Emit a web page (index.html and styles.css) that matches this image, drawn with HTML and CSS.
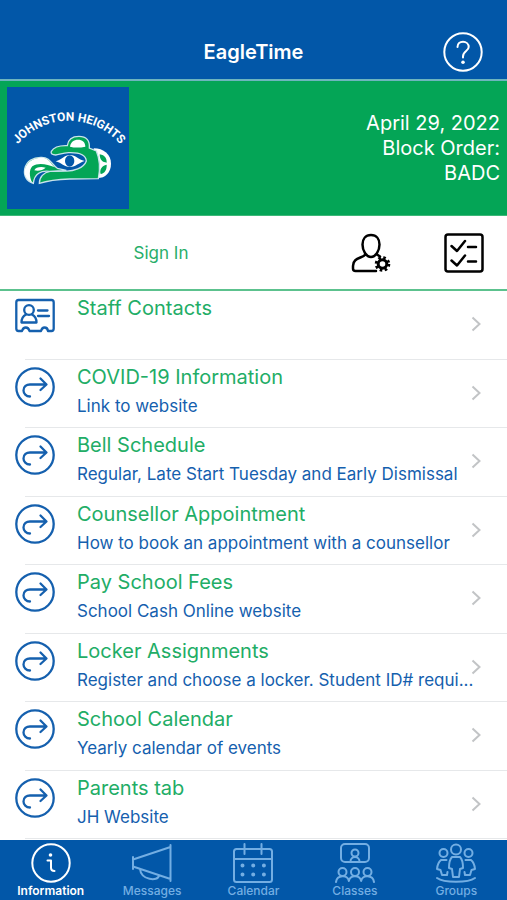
FILE: index.html
```html
<!DOCTYPE html>
<html lang="en">
<head>
    <meta charset="UTF-8">
    <meta name="viewport" content="width=device-width, initial-scale=1.0">
    <title>EagleTime</title>
    <link rel="stylesheet" href="styles.css">
</head>
<body>
    <svg class="sprite" aria-hidden="true">
        <symbol id="icon-link" viewBox="0 0 40 40">
            <circle cx="20" cy="20" r="18.7" />
            <path d="M15 29.5C11 29.5 8.500 26.500 8.500 23.500C8.500 19.500 11.500 17.500 15 17.500H31M25.500 11.500L31.500 17.500L25.500 23" />
        </symbol>
        <symbol id="icon-chevron" viewBox="0 0 10 16">
            <path d="M1.500 1.500L8.500 8L1.500 14.500" />
        </symbol>
    </svg>

    <header class="header">
        <h1 class="header-title">EagleTime</h1>
        <button class="icon-button help" type="button" aria-label="Help">
            <svg class="icon" viewBox="0 0 40 40">
                <circle cx="20" cy="20" r="18.7" />
                <path d="M14.500 15C14.500 11.500 17 9.700 20 9.700C23 9.700 25.700 11.800 25.700 15C25.700 19.300 20 19 20 24.500V25.500" />
                <circle class="dot" cx="20" cy="30.300" r="1.800" />
            </svg>
        </button>
    </header>

    <section class="banner">
        <svg class="logo" viewBox="22 20 366 366" role="img" aria-label="Johnston Heights">
            <path id="logo-arc" fill="none" d="M48 200A202 202 0 0 1 368 200" />
            <text class="logo-text" text-anchor="middle"><textPath href="#logo-arc" startOffset="50%">JOHNSTON HEIGHTS</textPath></text>
            <path class="logo-white" d="M282 204C312 204 334 222 334 250C334 278 315 294 292 293Z" />
            <path class="logo-green" d="M300 222C316 224 322 236 321 247C310 246 300 240 300 222ZM321 253C322 268 315 279 303 281C299 268 306 256 321 253Z" />
            <path class="logo-outline" d="M155 213C162 201 178 195 203 196C205 178 218 168 238 168C260 168 271 181 269 203L290 212C301 238 302 266 296 295L210 296C178 297 147 300 119 309C119 290 132 276 151 273L195 272C220 274 253 263 260 242C258 222 235 216 207 217C190 218 180 222 168 224C158 224 152 220 155 213Z" />
            <path class="logo-white" d="M211 199C213 185 222 178 235 178C248 178 256 184 257 199C242 202 226 203 211 199Z" />
            <path class="logo-outline" d="M101 309C81 302 72 286 75 266C80 242 101 230 126 231C152 232 155 251 173 264L200 270L149 273C125 270 104 279 101 309Z" />
            <path class="logo-white" d="M97 306C79 297 72 282 76 266C82 244 101 232 126 232C148 233 152 248 165 261C143 252 116 246 98 258C88 268 89 289 97 306Z" />
            <path class="logo-white" d="M104 270C108 261 122 258 138 262C130 270 116 273 104 270Z" />
            <path class="logo-white" d="M168 243C189 237 193 224 211 224C229 224 235 238 255 242C236 247 230 260 211 260C192 260 187 248 168 243Z" />
            <ellipse class="logo-blue" cx="210" cy="242" rx="14" ry="17" />
        </svg>
        <p class="banner-text">April 29, 2022<br>Block Order:<br>BADC</p>
    </section>

    <div class="account">
        <button class="sign-in" type="button">Sign In</button>
        <button class="icon-button" type="button" aria-label="Account settings">
            <svg class="icon" viewBox="0 0 40 40">
                <path d="M11.500 11.500C11.500 6 14.500 2 20 2C25.500 2 28.500 6 28.500 11.500C28.500 18 24.500 24 20 24C15.500 24 11.500 18 11.500 11.500ZM14.500 21.500C11 25.500 2 24.500 2 33V35.500C2 37 3 38 4.500 38H25M26 21.500L29 23.500" />
                <circle class="gear-teeth" cx="31.500" cy="31" r="6.300" />
                <circle class="gear-ring" cx="31.500" cy="31" r="4.300" />
            </svg>
        </button>
        <button class="icon-button" type="button" aria-label="Checklist">
            <svg class="icon" viewBox="0 0 40 40">
                <rect x="1.500" y="1.500" width="37" height="37" rx="2.500" />
                <path d="M7.500 13L13 18L21 8M7.500 27.500L13 32.500L21 22.500M24 14H32M24 28.500H32" />
            </svg>
        </button>
    </div>

    <main class="list">
        <a class="row" href="#">
            <svg class="icon" viewBox="0 0 40 40">
                <path d="M3.500 5H36.500Q38.700 5 38.700 7.500V33.500Q38.700 36 36.500 36H33Q32.500 32.500 29.500 32.500Q27 32.500 26 36H14.500Q13.500 32.500 10.800 32.500Q8 32.500 7 36H3.500Q1.300 36 1.300 33.500V7.500Q1.300 5 3.500 5Z" />
                <circle cx="14" cy="15" r="4.800" />
                <path d="M11 19.500C8 21 6.500 24 6.500 27.500H21.500C21.500 24 20 21 17 19.500M23 15.500H32.500M23 21H34" />
            </svg>
            <div class="row-text">
                <h2 class="row-title">Staff Contacts</h2>
            </div>
            <svg class="chevron"><use href="#icon-chevron" /></svg>
        </a>
        <a class="row" href="#">
            <svg class="icon"><use href="#icon-link" /></svg>
            <div class="row-text">
                <h2 class="row-title">COVID-19 Information</h2>
                <p class="row-detail">Link to website</p>
            </div>
            <svg class="chevron"><use href="#icon-chevron" /></svg>
        </a>
        <a class="row" href="#">
            <svg class="icon"><use href="#icon-link" /></svg>
            <div class="row-text">
                <h2 class="row-title">Bell Schedule</h2>
                <p class="row-detail">Regular, Late Start Tuesday and Early Dismissal</p>
            </div>
            <svg class="chevron"><use href="#icon-chevron" /></svg>
        </a>
        <a class="row" href="#">
            <svg class="icon"><use href="#icon-link" /></svg>
            <div class="row-text">
                <h2 class="row-title">Counsellor Appointment</h2>
                <p class="row-detail">How to book an appointment with a counsellor</p>
            </div>
            <svg class="chevron"><use href="#icon-chevron" /></svg>
        </a>
        <a class="row" href="#">
            <svg class="icon"><use href="#icon-link" /></svg>
            <div class="row-text">
                <h2 class="row-title">Pay School Fees</h2>
                <p class="row-detail">School Cash Online website</p>
            </div>
            <svg class="chevron"><use href="#icon-chevron" /></svg>
        </a>
        <a class="row" href="#">
            <svg class="icon"><use href="#icon-link" /></svg>
            <div class="row-text">
                <h2 class="row-title">Locker Assignments</h2>
                <p class="row-detail">Register and choose a locker. Student ID# requi...</p>
            </div>
            <svg class="chevron"><use href="#icon-chevron" /></svg>
        </a>
        <a class="row" href="#">
            <svg class="icon"><use href="#icon-link" /></svg>
            <div class="row-text">
                <h2 class="row-title">School Calendar</h2>
                <p class="row-detail">Yearly calendar of events</p>
            </div>
            <svg class="chevron"><use href="#icon-chevron" /></svg>
        </a>
        <a class="row" href="#">
            <svg class="icon"><use href="#icon-link" /></svg>
            <div class="row-text">
                <h2 class="row-title">Parents tab</h2>
                <p class="row-detail">JH Website</p>
            </div>
            <svg class="chevron"><use href="#icon-chevron" /></svg>
        </a>
    </main>

    <nav class="tabs">
        <a class="tab active" href="#">
            <svg class="icon" viewBox="0 0 40 40">
                <circle cx="20" cy="20" r="18.700" />
                <path d="M16.500 17.500H20V25Q20 28 23.500 28" />
                <circle class="dot" cx="19.500" cy="12" r="1.800" />
            </svg>
            Information
        </a>
        <a class="tab" href="#">
            <svg class="icon" viewBox="0 0 40 40">
                <path d="M1 14V26M1 16.500L38.500 4M1 23.500L38.500 36M38.500 2V38M8 26C9 37 26 39 27 32.500" />
            </svg>
            Messages
        </a>
        <a class="tab" href="#">
            <svg class="icon" viewBox="0 0 40 40">
                <rect x="1" y="6" width="38" height="33" rx="2.500" />
                <path d="M1 16H39M11.500 1V11M28.500 1V11" />
                <path class="days" d="M9.500 22.500H31M9.500 31.500H31" />
            </svg>
            Calendar
        </a>
        <a class="tab" href="#">
            <svg class="icon" viewBox="0 0 40 40">
                <rect x="6" y="1" width="28" height="18" rx="4" />
                <circle cx="20" cy="10" r="3.500" />
                <path d="M15.500 18.500C15.500 12.500 24.500 12.500 24.500 18.500" />
                <circle cx="7.500" cy="29" r="4" />
                <circle cx="20" cy="29" r="4" />
                <circle cx="32.500" cy="29" r="4" />
                <path d="M1 39C2 31.500 13 31.500 13.800 38C15 31.500 25 31.500 26.200 38C27 31.500 38 31.500 39 39" />
            </svg>
            Classes
        </a>
        <a class="tab" href="#">
            <svg class="icon" viewBox="0 0 40 40">
                <circle cx="20" cy="6.500" r="5" />
                <circle cx="7.500" cy="10" r="4" />
                <circle cx="32.500" cy="10" r="4" />
                <path d="M16 14H24Q27 17 27 25L24 26L23 34H17L16 26L13 25Q13 17 16 14ZM10.500 17H5Q1.500 20 1 26L4.500 27L6 32H11L11.500 29M29.500 17H35Q38.500 20 39 26L35.500 27L34 32H29L28.500 29M1 35C8 40 32 40 39 35" />
            </svg>
            Groups
        </a>
    </nav>
</body>
</html>
```

FILE: styles.css
```css
* {
    box-sizing: border-box;
}

body {
    margin: 0;
    min-height: 100vh;
    display: flex;
    flex-direction: column;
    font-family: Inter, 'Liberation Sans', sans-serif;
    background-color: #FFF;
}

h1,
h2,
p {
    margin: 0;
    font-weight: 400;
}

a {
    color: inherit;
    text-decoration: none;
}

button {
    padding: 0;
    border: 0;
    background: none;
    font: inherit;
    color: inherit;
}

.sprite {
    display: none;
}

.icon {
    display: block;
    flex: none;
    width: 40px;
    height: 40px;
    fill: none;
    stroke: currentColor;
    stroke-width: 2;
    stroke-linecap: round;
    stroke-linejoin: round;
}

.dot {
    fill: currentColor;
    stroke: none;
}

.header {
    display: grid;
    grid-template-columns: 1fr auto 1fr;
    align-items: center;
    height: 81px;
    padding: 25px 24px 0;
    border-bottom: 2px solid #6DB5BE;
    background-color: #0257A8;
    color: #FFF;
}

.header-title {
    grid-column: 2;
    font-size: 20px;
    font-weight: 600;
}

.help {
    justify-self: end;
}

.banner {
    display: flex;
    align-items: flex-start;
    justify-content: space-between;
    height: 134px;
    padding: 6px 7px;
    background-color: #04A556;
    color: #FFF;
}

.logo {
    width: 122px;
    height: 122px;
    background-color: #0257A8;
}

.logo-text {
    font-family: Roboto, sans-serif;
    font-size: 36px;
    font-weight: 700;
    fill: #FFF;
}

.logo-white {
    fill: #FFF;
}

.logo-green {
    fill: #04A556;
}

.logo-blue {
    fill: #0257A8;
}

.logo-outline {
    fill: #04A556;
    stroke: #C9E3EC;
    stroke-width: 4;
}

.banner-text {
    padding-top: 24px;
    font-size: 20px;
    line-height: 25px;
    text-align: right;
}

.account {
    display: flex;
    align-items: center;
    justify-content: flex-end;
    gap: 53px;
    height: 76px;
    padding-right: 23px;
    border-top: 1px solid #3CB878;
    border-bottom: 2px solid #5CC28E;
    color: #000;
}

.account .icon {
    stroke-width: 2.5;
}

.account .gear-teeth {
    stroke-width: 3;
    stroke-dasharray: 2.500 2.448;
    stroke-linecap: butt;
}

.account .gear-ring {
    stroke-width: 3;
}

.sign-in {
    flex: 1;
    padding-left: 24px;
    font-size: 17px;
    color: #27AE69;
}

.list {
    flex: 1;
    display: grid;
    grid-auto-rows: 1fr;
    padding-bottom: 1px;
}

.row {
    position: relative;
    display: flex;
    gap: 22px;
    padding: 3px 25px 0 15px;
    color: #1560AE;
}

.row::after {
    content: '';
    position: absolute;
    left: 25px;
    right: 0;
    bottom: 0;
    border-bottom: 1px solid #E6E8EA;
}

.row .icon {
    margin-top: 4px;
    stroke-width: 2.3;
}

.row:first-child .icon {
    margin-top: 1px;
}

.row-text {
    flex: 1;
    white-space: nowrap;
}

.row-title {
    font-size: 20px;
    line-height: 28px;
    color: #22AD66;
}

.row-detail {
    font-size: 17px;
    line-height: 31px;
}

.chevron {
    position: absolute;
    right: 26px;
    top: 25px;
    width: 10px;
    height: 16px;
    fill: none;
    stroke: #C2C4C6;
    stroke-width: 2;
}

.tabs {
    display: grid;
    grid-template-columns: repeat(5, 1fr);
    height: 60px;
    padding-top: 3px;
    background-color: #0257A8;
    color: #73AEE3;
}

.tab {
    display: flex;
    flex-direction: column;
    align-items: center;
    font-size: 12px;
    line-height: 16px;
    font-weight: 500;
}

.tab .days {
    stroke-width: 4;
    stroke-dasharray: 0 10.700;
}

.active {
    font-weight: 600;
    color: #FFF;
}
```
